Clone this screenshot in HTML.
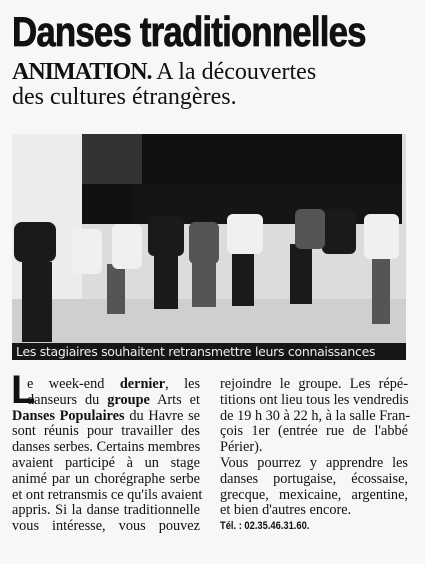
<!DOCTYPE html>
<html><head><meta charset="utf-8"><style>
body{margin:0;width:425px;height:564px;background:#f7f7f7;overflow:hidden;position:relative;font-family:"Liberation Serif",serif;color:#111}
.t{position:absolute;left:12px;top:8px;font:bold 42px/48px "Liberation Sans",sans-serif;transform:scaleX(0.83);transform-origin:0 0;white-space:nowrap;letter-spacing:-1px;-webkit-text-stroke:0.8px #111}
.s{position:absolute;left:12px;top:60px;font-size:24px;line-height:25px}
.s b{font-weight:900;letter-spacing:-1px}
.col{position:absolute;top:377px;width:188px;font-size:14.3px;line-height:15.8px}
.col div{text-align:justify;text-align-last:justify;white-space:nowrap;height:15.8px}
.col div.l{text-align-last:left}
.cap{position:absolute;left:12px;top:343px;width:394px;height:17px;background:#161616;color:#eee;font:12.5px/17px "DejaVu Sans",sans-serif;padding-left:4px;box-sizing:border-box;letter-spacing:-0.3px;white-space:nowrap;overflow:hidden}
</style></head><body>
<div class="t">Danses traditionnelles</div>
<div class="s"><b>ANIMATION.</b> A la découvertes<br>des cultures étrangères.</div>
<svg style="position:absolute;left:12px;top:134px" width="394" height="210">
<rect width="394" height="210" fill="#dcdcdc"/>
<rect x="0" y="0" width="70" height="165" fill="#ececec"/>
<rect x="70" y="0" width="320" height="90" fill="#111"/>
<rect x="70" y="0" width="60" height="50" fill="#333"/>
<rect x="120" y="50" width="270" height="40" fill="#151515"/>
<rect x="0" y="165" width="394" height="45" fill="#cfcfcf"/>
<g fill="#1a1a1a">
<rect x="2" y="88" width="42" height="40" rx="8"/><rect x="10" y="128" width="30" height="80"/>
<rect x="136" y="82" width="36" height="40" rx="6"/><rect x="142" y="120" width="24" height="55"/>
<rect x="220" y="112" width="22" height="60"/>
<rect x="278" y="110" width="22" height="60"/>
<rect x="310" y="75" width="34" height="45" rx="6"/>
</g>
<g fill="#555"><rect x="177" y="88" width="30" height="42" rx="6"/><rect x="180" y="128" width="24" height="45"/>
<rect x="283" y="75" width="30" height="40" rx="6"/><rect x="95" y="130" width="18" height="50"/><rect x="360" y="120" width="18" height="70"/></g>
<g fill="#f0f0f0"><rect x="60" y="95" width="30" height="45" rx="6"/><rect x="100" y="90" width="30" height="45" rx="6"/><rect x="215" y="80" width="36" height="40" rx="6"/><rect x="352" y="80" width="35" height="45" rx="6"/></g>
</svg>
<div class="cap">Les stagiaires souhaitent retransmettre leurs connaissances</div>
<div class="col" style="left:12px">
<div style="padding-left:15px">e week-end <b>dernier</b>, les</div>
<div style="padding-left:15px">danseurs du <b>groupe</b> Arts et</div>
<div><b>Danses Populaires</b> du Havre se</div>
<div>sont réunis pour travailler des</div>
<div>danses serbes. Certains membres</div>
<div>avaient participé à un stage</div>
<div>animé par un chorégraphe serbe</div>
<div>et ont retransmis ce qu'ils avaient</div>
<div>appris. Si la danse traditionnelle</div>
<div>vous intéresse, vous pouvez</div>
</div>
<div style="position:absolute;left:11px;top:372px;font:bold 40px/36px 'Liberation Sans',sans-serif">L</div>
<div class="col" style="left:220px">
<div>rejoindre le groupe. Les répé-</div>
<div>titions ont lieu tous les vendredis</div>
<div>de 19 h 30 à 22 h, à la salle Fran-</div>
<div>çois 1er (entrée rue de l'abbé</div>
<div class="l">Périer).</div>
<div>Vous pourrez y apprendre les</div>
<div>danses portugaise, écossaise,</div>
<div>grecque, mexicaine, argentine,</div>
<div class="l">et bien d'autres encore.</div>
<div class="l" style="font:bold 11px/15.8px 'Liberation Sans',sans-serif;transform:scaleX(.85);transform-origin:0 0">Tél. : 02.35.46.31.60.</div>
</div>
</body></html>
